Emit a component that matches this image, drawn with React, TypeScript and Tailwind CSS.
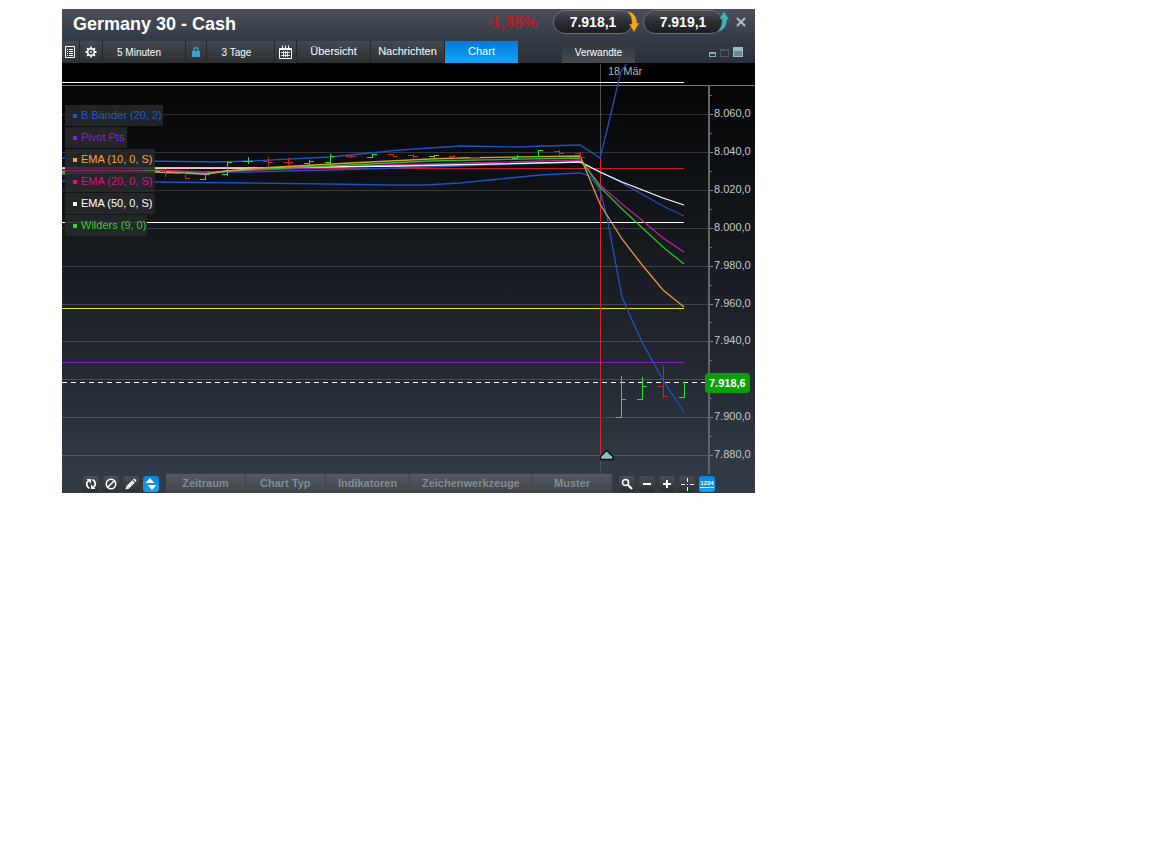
import type { ReactNode } from 'react'

interface Indicator {
    label: string
    color: string
    width: string
}

interface Bar {
    x: number
    high: number
    low: number
    open: number
    close: number
    up: boolean
}

const WIDTH = 693
const HEIGHT = 410
const AXIS_X = 647
const LAST_X = 622

const indicators: Indicator[] = [
    { label: 'B Bänder (20, 2)', color: '#2158c8', width: 'w-[98px]' },
    { label: 'Pivot Pts', color: '#8a22d8', width: 'w-[62px]' },
    { label: 'EMA (10, 0, S)', color: '#f5a742', width: 'w-[90px]' },
    { label: 'EMA (20, 0, S)', color: '#d4128a', width: 'w-[90px]' },
    { label: 'EMA (50, 0, S)', color: '#ffffff', width: 'w-[90px]' },
    { label: 'Wilders (9, 0)', color: '#2fd22f', width: 'w-[82px]' },
]

const axisLabels = [
    { y: 50, text: '8.060,0' },
    { y: 88, text: '8.040,0' },
    { y: 126, text: '8.020,0' },
    { y: 164, text: '8.000,0' },
    { y: 202, text: '7.980,0' },
    { y: 240, text: '7.960,0' },
    { y: 277, text: '7.940,0' },
    { y: 315, text: '' },
    { y: 353, text: '7.900,0' },
    { y: 391, text: '7.880,0' },
]

const curves = [
    // Bollinger bands: upper, middle, lower
    { color: '#1f52c4', points: '0,94 88,97 153,98 188,97 268,93 338,86 398,82 458,83 481,82 518,81 538,94 545,66 555,24 559,8 565,-1' },
    { color: '#1f52c4', points: '0,108 93,108 188,108 268,106 368,103 518,98 538,108 560,119 601,142 622,152' },
    { color: '#1f52c4', points: '0,117 93,118 188,119 268,120 328,121 363,121 398,119 448,114 478,111 518,109 528,112 538,126 545,153 560,233 570,256 581,280 601,316 622,348' },
    // Moving averages
    { color: '#c01e98', points: '0,106 93,106 143,108 198,106 328,101 518,96 538,121 560,140 581,157 601,174 622,188' },
    { color: '#ffffff', points: '0,104 93,104 188,104 338,102 518,98 538,108 560,118 601,134 622,141' },
    { color: '#24c424', points: '0,110 93,107 143,110 165,107 198,105 288,101 368,97 518,94 538,123 560,145 601,183 622,200' },
    { color: '#e09a3c', points: '0,108 93,108 143,110 165,107 198,104 288,99 368,95 398,94 518,92 538,140 560,175 581,202 601,226 622,243' },
]

const bars: Bar[] = [
    { x: 103, high: 105, low: 112, open: 107, close: 109, up: false },
    { x: 123, high: 109, low: 114, open: 109, close: 114, up: false },
    { x: 143, high: 110, low: 115, open: 115, close: 110, up: true },
    { x: 165, high: 98, low: 111, open: 110, close: 98, up: true },
    { x: 186, high: 93, low: 99, open: 97, close: 97, up: true },
    { x: 206, high: 93, low: 101, open: 97, close: 98, up: false },
    { x: 226, high: 94, low: 101, open: 98, close: 98, up: false },
    { x: 247, high: 96, low: 100, open: 99, close: 97, up: true },
    { x: 268, high: 90, low: 101, open: 98, close: 92, up: true },
    { x: 289, high: 91, low: 93, open: 92, close: 92, up: false },
    { x: 310, high: 90, low: 93, open: 93, close: 90, up: true },
    { x: 331, high: 90, low: 92, open: 90, close: 92, up: false },
    { x: 351, high: 90, low: 94, open: 91, close: 92, up: false },
    { x: 372, high: 91, low: 93, open: 92, close: 91, up: true },
    { x: 392, high: 91, low: 94, open: 92, close: 93, up: false },
    { x: 413, high: 93, low: 94, open: 93, close: 93, up: false },
    { x: 455, high: 91, low: 94, open: 94, close: 92, up: true },
    { x: 476, high: 86, low: 92, open: 92, close: 86, up: true },
    { x: 497, high: 86, low: 91, open: 87, close: 89, up: false },
    { x: 518, high: 88, low: 95, open: 89, close: 93, up: false },
    { x: 559, high: 312, low: 353, open: 353, close: 335, up: true },
    { x: 580, high: 313, low: 335, open: 335, close: 322, up: true },
    { x: 601, high: 302, low: 333, open: 322, close: 332, up: false },
    { x: 622, high: 318, low: 333, open: 333, close: 318, up: true },
]

function IconCell({ label, className = '', children }: { label: string; className?: string; children: ReactNode }) {
    return (
        <button
            type="button"
            aria-label={label}
            className={`flex shrink-0 items-center justify-center border-r border-[#24282c] ${className}`}
        >
            {children}
        </button>
    )
}

function ToolButton({ label, active = false, children }: { label: string; active?: boolean; children: ReactNode }) {
    return (
        <button
            type="button"
            aria-label={label}
            className={`flex h-4 w-4 shrink-0 items-center justify-center rounded-[3px] ${
                active
                    ? 'bg-linear-to-b from-[#0a84dc] to-[#14a0f4]'
                    : 'bg-linear-to-b from-[#4b5056] to-[#2b2f34]'
            }`}
        >
            <svg viewBox="0 0 16 16" className="h-4 w-4" fill="none" stroke="#fff">
                {children}
            </svg>
        </button>
    )
}

function TitleBar() {
    const pill =
        'relative h-6 w-20 rounded-full border border-[#6b7077] bg-linear-to-b from-[#4a4f56] via-[#2a2d32] to-[#1b1d21] text-sm leading-5 font-bold text-white'

    return (
        <header className="flex h-8 items-start bg-linear-to-b from-[#4a505a] to-[#353b46] pt-px pr-1.5 pl-[11px]">
            <h1 className="pt-0.5 text-lg leading-6 font-bold text-white">Germany 30 - Cash</h1>
            <span className="mr-4 ml-auto pt-px text-base leading-6 font-bold text-[#c3161d]">-1,35%</span>
            <button type="button" className={`${pill} mr-2.5`}>
                7.918,1
                <svg viewBox="0 0 14 24" className="absolute -top-px -right-2 h-6 w-3.5">
                    <path d="M1 1C7 2 11 6 11 13L13.500 13L8 22L3 14L6 14C6 9 5 5 1 1Z" fill="#f5a623" stroke="#6b4610" strokeWidth="0.5" />
                </svg>
            </button>
            <button type="button" className={pill}>
                7.919,1
                <svg viewBox="0 0 14 24" className="absolute -top-px -right-2 h-6 w-3.5">
                    <path d="M1 22C7 21 11 17 11 10L13.500 10L8 1L3 9L6 9C6 14 5 18 1 22Z" fill="#45b0b4" stroke="#164c50" strokeWidth="0.5" />
                </svg>
            </button>
            <button type="button" aria-label="Schließen" className="mt-1 ml-2.5 flex h-4 w-4 items-center justify-center">
                <svg viewBox="0 0 10 10" className="h-2.5 w-2.5" stroke="#a9bfcc" strokeWidth="2">
                    <path d="M1 1L9 9M9 1L1 9" />
                </svg>
            </button>
        </header>
    )
}

function Toolbar() {
    const cell = 'shrink-0 border-r border-[#24282c] text-white'

    return (
        <nav className="flex h-[22px] bg-linear-to-b from-[#454a50] to-[#2b2f34]">
            <IconCell label="Liste" className="w-[18px] pr-px">
                <svg viewBox="0 0 12 14" className="h-3.5 w-3" fill="none" stroke="#fff">
                    <path d="M1.500 1.500H10.500V12.500H1.500Z" />
                    <path d="M3 4.500H4M5 4.500H9M3 6.500H4M5 6.500H9M3 8.500H4M5 8.500H9M3 10.500H4M5 10.500H9" />
                </svg>
            </IconCell>
            <IconCell label="Einstellungen" className="w-[23px]">
                <svg viewBox="0 0 12 12" className="h-3 w-3" fill="none" stroke="#fff">
                    <circle cx="6" cy="6" r="3.300" strokeWidth="1.500" />
                    <circle cx="6" cy="6" r="0.700" fill="#fff" strokeWidth="0.500" />
                    <path
                        strokeWidth="1.800"
                        d="M6 0.500V2.500M6 9.500V11.500M0.500 6H2.500M9.500 6H11.500M2.100 2.100L3.500 3.500M8.500 8.500L9.900 9.900M2.100 9.900L3.500 8.500M8.500 3.500L9.900 2.100"
                    />
                </svg>
            </IconCell>
            <button type="button" className={`${cell} w-[83px] pr-2.5 text-[10px]`}>5 Minuten</button>
            <IconCell label="Sperren" className="w-[21px]">
                <svg viewBox="0 0 10 12" className="h-3 w-2.5">
                    <path d="M3 6V3.500C3 1 7 1 7 3.500V6" fill="none" stroke="#3ea0cc" strokeWidth="1.500" />
                    <rect x="1" y="5" width="8" height="6" fill="#3ea0cc" />
                </svg>
            </IconCell>
            <button type="button" className={`${cell} w-[68px] pr-2 text-[10px]`}>3 Tage</button>
            <IconCell label="Kalender" className="w-[22px]">
                <svg viewBox="0 0 13 14" className="h-3.5 w-[13px]" fill="none" stroke="#fff">
                    <path d="M0.500 3.500H12.500V13.500H0.500Z" />
                    <path d="M1 4.500H12M3.500 0.500V4M6.500 0.500V4M9.500 0.500V4" />
                    <path d="M2 7.500H11M2 10.500H11M4.500 6V12M6.500 6V12M8.500 6V12" strokeWidth="0.800" />
                </svg>
            </IconCell>
            <button type="button" className={`${cell} w-[74px] pb-0.5 text-[11px]`}>Übersicht</button>
            <button type="button" className={`${cell} w-[74px] pb-0.5 text-[11px]`}>Nachrichten</button>
            <button
                type="button"
                aria-current="page"
                className="w-[73px] shrink-0 bg-linear-to-b from-[#0878dc] to-[#10a4fa] pb-0.5 text-[11px] text-white"
            >
                Chart
            </button>
            <div className="flex flex-1 items-center bg-linear-to-b from-[#343b45] to-[#2a3039] pr-3 pl-11">
                <button type="button" className="h-full w-[73px] bg-linear-to-b from-[#30353b] to-[#474b50] text-[10px] text-white">
                    Verwandte
                </button>
                <div className="ml-auto flex items-end gap-1">
                    <button type="button" aria-label="Minimieren" className="h-[5px] w-[7px] border border-t-2 border-[#8fabbb]" />
                    <button type="button" aria-label="Verkleinern" className="h-2 w-[9px] border border-t-2 border-[#4b5662]" />
                    <button type="button" aria-label="Maximieren" className="h-2.5 w-2.5 border border-t-4 border-[#9dbccb] bg-[#6d8796]" />
                </div>
            </div>
        </nav>
    )
}

function PriceChart() {
    return (
        <svg
            viewBox={`0 0 ${WIDTH} ${HEIGHT}`}
            className="block h-auto w-full"
            role="img"
            aria-label="Germany 30 Kursverlauf"
            fontFamily="Liberation Sans, sans-serif"
            fontSize="11"
        >
            <defs>
                <linearGradient id="plot" x1="0" y1="0" x2="0" y2="1">
                    <stop offset="0" stopColor="#040506" />
                    <stop offset="0.4" stopColor="#15191e" />
                    <stop offset="0.7" stopColor="#22272f" />
                    <stop offset="1" stopColor="#323b46" />
                </linearGradient>
            </defs>
            <rect width={WIDTH} height="21" fill="#000" />
            <rect y="21" width={WIDTH} height="389" fill="url(#plot)" />

            {/* Grid and price axis */}
            <g shapeRendering="crispEdges">
                {axisLabels.map(({ y }) => (
                    <g key={y}>
                        <rect y={y} width={AXIS_X} height="1" fill="#fff" fillOpacity="0.17" />
                        <rect x={AXIS_X} y={y} width="4" height="1" fill="#85898e" />
                        <rect x={AXIS_X} y={y - 19} width="3" height="1" fill="#6d7176" />
                    </g>
                ))}
                <rect x="538" width="1" height={HEIGHT} fill="#4c5056" />
                <rect y="21" width={WIDTH} height="1" fill="#77797c" />
                <rect x={AXIS_X - 1} y="21" width="2" height="389" fill="#62666b" />
            </g>
            {axisLabels.map(({ y, text }) => (
                <text key={y} x="652" y={y + 3} fill="#c6c9cc">
                    {text}
                </text>
            ))}
            <text x="546" y="11" fill="#b4b4b4">18 Mär</text>

            {/* Pivot levels */}
            <g shapeRendering="crispEdges">
                <rect y="18" width={LAST_X} height="1" fill="#fff" />
                <rect y="104" width={LAST_X} height="1" fill="#d4181e" />
                <rect y="158" width={LAST_X} height="1" fill="#fff" />
                <rect y="244" width={LAST_X} height="1" fill="#e8e800" />
                <rect y="298" width={LAST_X} height="1" fill="#8420cc" />
                <rect x="538" y="94" width="1" height="300" fill="#d4262c" />
                <rect x="538" y="353" width="6" height="1" fill="#a01c20" />
                <path d="M0 318.500H644" stroke="#fff" strokeDasharray="5 4" />
            </g>

            {curves.map(({ color, points }) => (
                <polyline key={points} points={points} fill="none" stroke={color} strokeWidth="1.3" />
            ))}

            {bars.map(({ x, high, low, open, close, up }) => (
                <g key={x} fill={up ? '#2fdf2f' : '#d4221c'}>
                    <rect x={x - 5} y={open} width="5" height="1" />
                    <rect x={x} y={high} width="1" height={low - high + 1} />
                    <rect x={x} y={close} width={x < LAST_X ? 5 : 1} height="1" />
                </g>
            ))}

            <path d="M538.500 395.500V392.500L544.500 386.500L551 392.500V395.500Z" fill="#86c2c8" stroke="#0b1114" strokeWidth="1.500" />

            <rect x="643" y="309" width="45" height="20" rx="4" fill="#08a008" />
            <text x="647" y="323" fill="#fff" fontWeight="bold">7.918,6</text>
        </svg>
    )
}

function Legend() {
    return (
        <ul className="absolute top-[41px] left-[3px] space-y-px">
            {indicators.map(({ label, color, width }) => (
                <li
                    key={label}
                    className={`flex h-[21px] items-center gap-1 bg-[#262829]/90 pl-2 text-[11px] whitespace-nowrap ${width}`}
                    style={{ color }}
                >
                    <span className="h-1 w-1 shrink-0 bg-current" />
                    {label}
                </li>
            ))}
        </ul>
    )
}

function BottomBar() {
    const tab = 'h-full grow border-r border-[#3c424a]'

    return (
        <footer className="flex h-[19px] items-center bg-[#323a44] pr-10 pl-[21px]">
            <div className="flex gap-1 pr-[7px]">
                <ToolButton label="Aktualisieren">
                    <path d="M6.500 12.500C2.800 10.500 3 6.500 5.500 4.800M9.500 3.500C13.200 5.500 13 9.500 10.500 11.200" strokeWidth="1.700" />
                    <path d="M3.500 3H8V7.500ZM12.500 13H8V8.500Z" fill="#fff" stroke="none" />
                </ToolButton>
                <ToolButton label="Zurücksetzen">
                    <circle cx="8" cy="8" r="4.700" strokeWidth="1.600" />
                    <path d="M4.700 11.300L11.300 4.700" strokeWidth="1.500" />
                </ToolButton>
                <ToolButton label="Zeichnen">
                    <path d="M5 11L10.500 5.500" strokeWidth="3.600" />
                    <path d="M2.500 13.500L3.500 9.500L6.500 12.500ZM10 3.500L11.500 2.500L13.500 4.500L12.500 6Z" fill="#fff" stroke="none" />
                </ToolButton>
                <ToolButton label="Skalieren" active>
                    <path d="M7 2L11.500 7H2.500ZM9 14L13.500 9H4.500Z" fill="#fff" stroke="none" />
                </ToolButton>
            </div>
            <div className="flex h-full flex-1 bg-linear-to-b from-[#555a61] to-[#3f444b] text-[11px] font-bold text-[#868b91]">
                <button type="button" className={`${tab} basis-20`}>Zeitraum</button>
                <button type="button" className={`${tab} basis-20`}>Chart Typ</button>
                <button type="button" className={`${tab} basis-[85px]`}>Indikatoren</button>
                <button type="button" className={`${tab} basis-[122px]`}>Zeichenwerkzeuge</button>
                <button type="button" className="h-full grow basis-20">Muster</button>
            </div>
            <div className="flex gap-1 pl-[7px]">
                <ToolButton label="Suchen">
                    <circle cx="6.500" cy="6.500" r="3" strokeWidth="1.500" />
                    <path d="M9 9L13 13" strokeWidth="2.200" />
                </ToolButton>
                <ToolButton label="Herauszoomen">
                    <path d="M4 8H12" strokeWidth="2" />
                </ToolButton>
                <ToolButton label="Hineinzoomen">
                    <path d="M4 8H12M8 4V12" strokeWidth="2" />
                </ToolButton>
                <ToolButton label="Fadenkreuz">
                    <path d="M2 8.500H6M11 8.500H15M8.500 2V6M8.500 11V15M8 8.500H9" />
                </ToolButton>
                <ToolButton label="Werte anzeigen" active>
                    <path d="M1 11.500H15" />
                    <text x="8" y="9" textAnchor="middle" fontSize="6" fontWeight="bold" fill="#fff" stroke="none">
                        1234
                    </text>
                </ToolButton>
            </div>
        </footer>
    )
}

export default function App() {
    return (
        <main className="min-h-screen bg-white pt-[9px] pr-4 pl-[62px] font-['Liberation_Sans',sans-serif]">
            <section className="w-full max-w-[693px] overflow-hidden">
                <TitleBar />
                <Toolbar />
                <div className="relative border-t border-black">
                    <PriceChart />
                    <Legend />
                </div>
                <BottomBar />
            </section>
        </main>
    )
}
